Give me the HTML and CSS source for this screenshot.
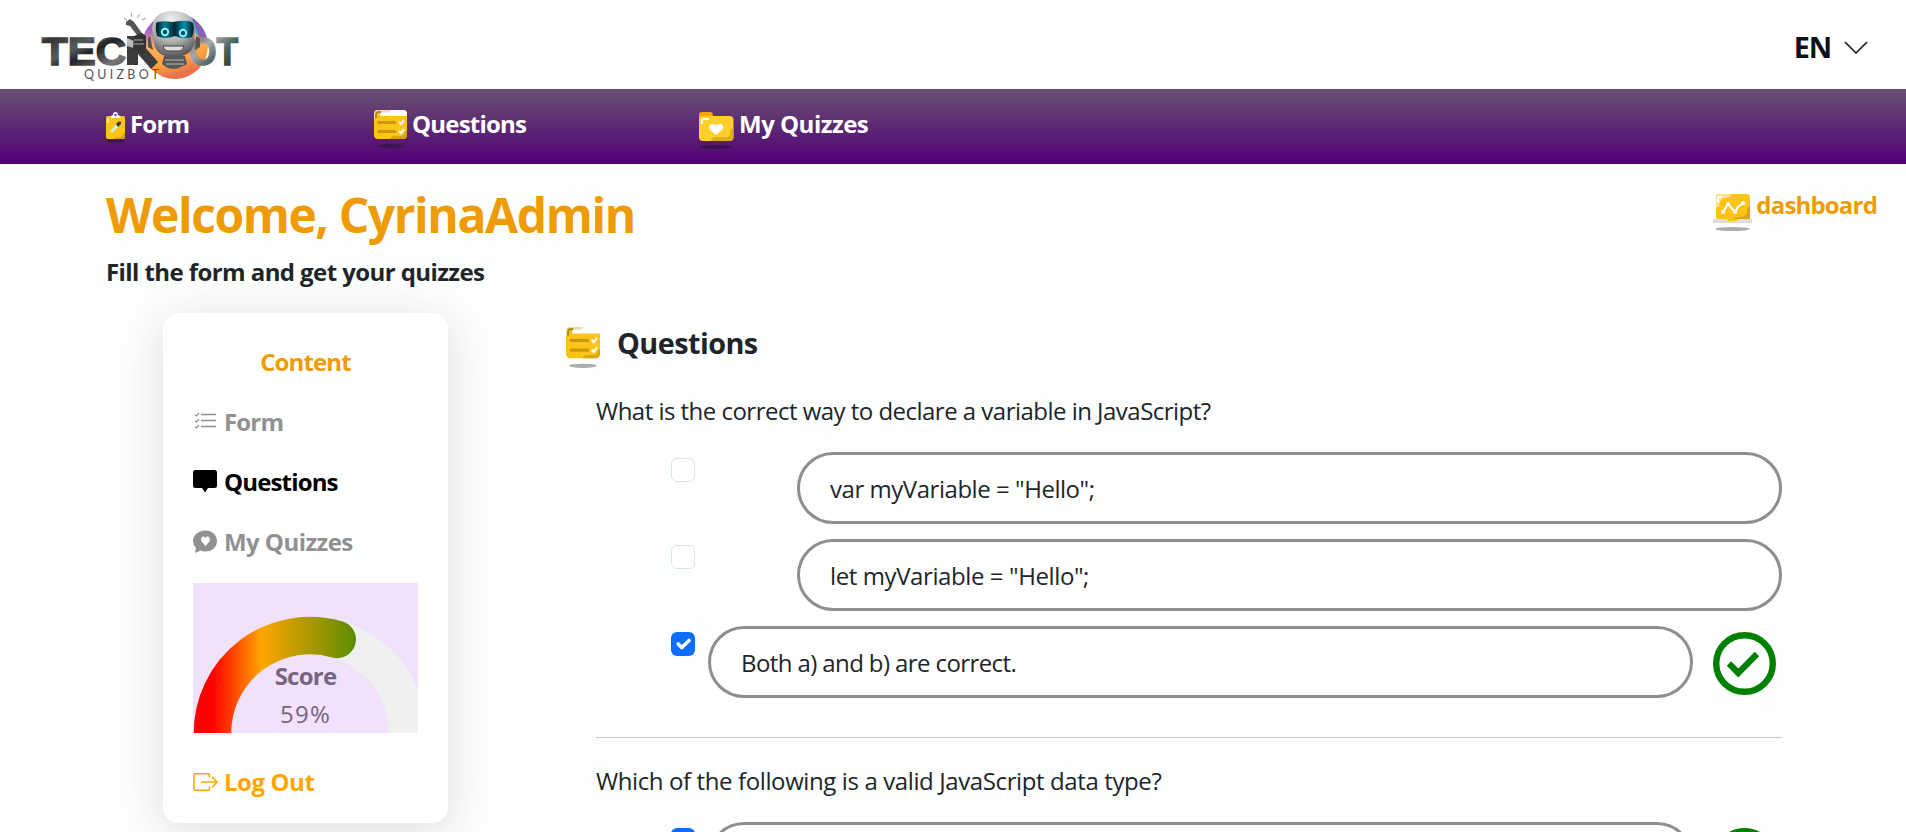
FILE: index.html
```html
<!DOCTYPE html>
<html lang="en">
<head>
<meta charset="utf-8">
<title>TechBot QuizBot</title>
<link rel="stylesheet" href="styles.css">
</head>
<body>
<svg class="defs" width="0" height="0" aria-hidden="true">
  <symbol id="list-icon" viewBox="0 0 33 38">
    <rect x="0" y="0" width="33" height="29" rx="4" fill="#fcc419"/>
    <path d="M4 0h25a4 4 0 0 1 4 4v2H6V0z" fill="#fff"/>
    <path d="M4 0h13q-1 2.500-4 2.500H6Q3 2.500 3 6v2H0V4a4 4 0 0 1 4-4z" fill="#ecdcb0"/>
    <path d="M1 8V5q0-4 4-4h2v2H5q-2 0-2 2v3z" fill="#b98a08"/>
    <path d="M33 20v5a4 4 0 0 1-4 4H16q1-3 5-3h5q5 0 5-4z" fill="#d6a514"/>
    <path d="M5 12.500h16M5 21.500h16" stroke="#c9980c" stroke-width="3" stroke-linecap="round"/>
    <path d="M25 12l2 2 3-4M25 21l2 2 3-4" fill="none" stroke="#fff" stroke-width="2"/>
    <ellipse class="icon-shadow" cx="16.500" cy="36" rx="13.300" ry="2"/>
  </symbol>
</svg>

<header class="topbar">
  <svg class="logo" width="230" height="88" viewBox="0 0 230 88">
    <defs>
      <linearGradient id="metal" x1="0" y1="0" x2="1" y2="1">
        <stop offset="0" stop-color="#999"/><stop offset=".15" stop-color="#333"/><stop offset=".4" stop-color="#555e5c"/><stop offset=".55" stop-color="#222"/><stop offset=".8" stop-color="#777"/><stop offset="1" stop-color="#333"/>
      </linearGradient>
      <linearGradient id="metal2" x1="0" y1="0" x2="1" y2="1">
        <stop offset="0" stop-color="#444"/><stop offset=".35" stop-color="#aaa"/><stop offset=".6" stop-color="#49645f"/><stop offset="1" stop-color="#222"/>
      </linearGradient>
      <linearGradient id="disc" x1="0" y1="0" x2=".3" y2="1">
        <stop offset="0" stop-color="#9b3fc4"/><stop offset=".28" stop-color="#a964c9"/><stop offset=".5" stop-color="#f6b060"/><stop offset=".8" stop-color="#fca33f"/><stop offset="1" stop-color="#e9734f"/>
      </linearGradient>
      <radialGradient id="skull" cx=".45" cy=".2" r=".9">
        <stop offset="0" stop-color="#f2f2f2"/><stop offset=".5" stop-color="#b5b5b5"/><stop offset="1" stop-color="#3c3c3c"/>
      </radialGradient>
      <linearGradient id="visor" x1="0" y1="0" x2="1" y2="0">
        <stop offset="0" stop-color="#04191f"/><stop offset=".25" stop-color="#078096"/><stop offset=".5" stop-color="#032730"/><stop offset=".75" stop-color="#0794ac"/><stop offset="1" stop-color="#04191f"/>
      </linearGradient>
    </defs>
    <circle cx="145" cy="46" r="33" fill="url(#disc)"/>
    <path d="M145 13a33 33 0 0 1 32 26l-10-4-12-18z" fill="#18bfdc"/>
    <path d="M162 18a33 33 0 0 1 15 21l-8-2z" fill="#8860b8"/>
    <text class="logo-word" x="12" y="65" textLength="84" lengthAdjust="spacingAndGlyphs" fill="url(#metal)" stroke="url(#metal)">TEC</text>
    <path d="M97 36h7v12l9-3 15 17-7 7-13-15v11h-11z" fill="#3d3d3d"/>
    <path d="M97 38l7 3v7l-7-2z" fill="#bbb"/>
    <path d="M96 22l4-3 4 3 10 14-4 3-10-13-4-1z" fill="#555"/>
    <path d="M104 36l8-3 4 3v12l-5 4-8-3z" fill="#333"/>
    <path d="M104 40h9M104 44h10" stroke="#aaa"/>
    <path d="M94 18l3 2M101 13l1 4M110 14l-3 4M116 18l-4 2" stroke="#999"/>
    <text class="logo-word" x="159" y="65" textLength="49" lengthAdjust="spacingAndGlyphs" fill="url(#metal2)" stroke="url(#metal2)">OT</text>
    <path d="M134 56h21l2 8-6 3q-8 4-15 0l-4-3z" fill="#575757"/>
    <path d="M135 60h19M136 64h18" stroke="#bbb"/>
    <path d="M120 36l-2 2v9l5 3zM166 36l4 2v9l-5 3z" fill="#555"/>
    <path d="M122 29q1-18 21-18t22 18l-1 14q-3 14-20 14t-20-13z" fill="url(#skull)"/>
    <path d="M126 23q4-3 17-1 16-3 20 1 2 7-1 14-8 3-17-1-10 4-18 0-2-6-1-13z" fill="url(#visor)"/>
    <circle cx="135" cy="32" r="3.200" fill="#064c60" stroke="#8ff1fc" stroke-width="2"/>
    <circle cx="153" cy="33" r="3.200" fill="#064c60" stroke="#8ff1fc" stroke-width="2"/>
    <path d="M133 46h21q-1 5-6 5h-9q-5 0-6-5z" fill="#ddd" stroke="#444"/>
    <text class="logo-sub" x="54" y="79" textLength="75" fill="#555">QUIZBOT</text>
  </svg>
  <div class="language"><span class="language-code">EN</span>
    <svg width="24" height="13" viewBox="0 0 24 13"><path d="M1 1l11 11L23 1" fill="none" stroke="#111" stroke-width="1.500"/></svg>
  </div>
</header>

<nav class="navbar">
  <a class="nav-item nav-form">
    <svg width="19" height="31" viewBox="0 0 19 31">
      <ellipse cx="9.500" cy="29" rx="9.500" ry="1.600" fill="#3d1352"/>
      <rect x="0" y="4" width="19" height="23" rx="2" fill="#fcc419"/>
      <path d="M19 20v5q0 2-2 2H8l2-2h5q2 0 2-3z" fill="#d6a514"/>
      <path d="M5 6V4l2-1q0-3 2.500-3T12 3l2 1v2z" fill="#fff"/><circle cx="9.500" cy="3" r="1.200" fill="#63406f"/>
      <path d="M2 6v5" stroke="#fff3c5" stroke-width="1.500"/>
      <path d="M4 21l1-3 6-6 2 2-6 6z" fill="#d4f5e4"/><path d="M10 12l3-2.500 2 .5v2l-3 3z" fill="#303a3a"/>
    </svg><span class="nav-label">Form</span></a>
  <a class="nav-item nav-questions"><svg class="on-dark" width="33" height="38"><use href="#list-icon"/></svg><span class="nav-label">Questions</span></a>
  <a class="nav-item nav-quizzes">
    <svg width="35" height="38" viewBox="0 0 35 38">
      <path d="M0 3q0-3 3-3h8q3 0 3 4h17v8H0z" fill="#ffa502"/>
      <rect x="0" y="4" width="34.500" height="25" rx="4" fill="#ffd02b"/>
      <path d="M34.500 16v9a4 4 0 0 1-4 4H12q1-4 5-4h10q4 0 4-4 0-4 3.500-5z" fill="#dfad20"/>
      <path d="M3 12V9q0-2 2-2h5" stroke="#fff" stroke-width="2" fill="none"/>
      <path d="M17 23l-5.500-5q-3-4 1-6 3-1 4.500 2 2-3 5-2 4 2 1 6z" fill="#fff"/>
      <ellipse cx="17" cy="35" rx="16" ry="2" fill="#3d1352"/>
    </svg><span class="nav-label">My Quizzes</span></a>
</nav>

<main class="page">
  <div class="intro">
    <div>
      <h1 class="welcome"><span>Welcome, CyrinaAdmin</span></h1>
      <p class="tagline"><span>Fill the form and get your quizzes</span></p>
    </div>
    <a class="dashboard">
      <svg width="39" height="37" viewBox="0 0 39 37">
        <rect x="3" y="0" width="34" height="26" rx="3" fill="#fcc419"/>
        <path d="M3 3q0-3 3-3h12q-1 4-6 4-5 0-5 5l-1 4H3z" fill="#fde28b"/>
        <path d="M37 12v14H20q1-3 6-3 8 0 8-6 0-4 3-5z" fill="#d6a514"/>
        <path d="M5 8V5q0-2 2-2h2" stroke="#fff" stroke-width="2" fill="none"/>
        <path d="M10 18l5-8 7 8 3-5 5-4" fill="none" stroke="#fff" stroke-width="2"/>
        <g fill="#fff"><circle cx="10" cy="18" r="2"/><circle cx="15" cy="10" r="2"/><circle cx="22" cy="18" r="2"/><circle cx="30" cy="9" r="2"/></g>
        <path d="M0 25h39v4H0z" fill="#dedede"/><path d="M14 25h12l-2 2h-9z" fill="#fcc419"/>
        <ellipse cx="19.500" cy="35" rx="17" ry="2" fill="#adadad"/>
      </svg><span>dashboard</span></a>
  </div>

  <div class="columns">
    <aside class="card">
      <h2 class="card-title"><span>Content</span></h2>
      <a class="side-link side-form"><svg width="24" height="24" viewBox="0 0 24 24" fill="none" stroke="#919191" stroke-width="1.300"><path d="M8 5.500h15M8 11.500h15M8 17.500h15M2 6l1.500 1L6 4M2 12l1.500 1L6 10M2 18l1.500 1L6 16"/></svg><span>Form</span></a>
      <a class="side-link side-questions"><svg width="24" height="24" viewBox="0 0 24 24"><path d="M2.500 1h19Q24 1 24 3.500v13q0 2.500-2.500 2.500H15l-3 4.500L9 19H2.500Q0 19 0 16.500v-13Q0 1 2.500 1z"/></svg><span>Questions</span></a>
      <a class="side-link side-quizzes"><svg width="24" height="24" viewBox="0 0 24 24"><path d="M12.500 1.500C19 1.500 24 6 24 12s-5 10.500-11.500 10.500q-3 0-5-1L2 24l1-5q-3-3-3-7C0 6 6 1.500 12.500 1.500z" fill="#919191"/><path d="M12.500 17L9 13q-2-3 0-5 2-1.300 3.500 1Q14 6.700 16 8q2 2 0 5z" fill="#fff"/></svg><span>My Quizzes</span></a>
      <div class="gauge">
        <svg width="225" height="150" viewBox="0 0 225 150">
          <defs><linearGradient id="score" gradientUnits="userSpaceOnUse" x1="19.500" y1="0" x2="214.500" y2="0"><stop offset="0" stop-color="red"/><stop offset=".25" stop-color="orange"/><stop offset="1" stop-color="green"/></linearGradient></defs>
          <path d="M19.500 150a97.500 97.500 0 0 1 195 0" fill="none" stroke="#f0f0f0" stroke-width="37.500"/>
          <path d="M19.500 170V150A97.500 97.500 0 0 1 144.200 56.400" fill="none" stroke="url(#score)" stroke-width="37.500" stroke-linecap="round"/>
        </svg>
        <div class="gauge-text"><span class="gauge-label">Score</span><span class="gauge-value">59%</span></div>
      </div>
      <a class="side-link logout"><svg width="25" height="24" viewBox="0 0 25 24" fill="none" stroke="#ffa502" stroke-width="1.500"><path d="M16.500 7.500V5q0-1.300-1.300-1.300H2.300Q1 3.700 1 5v14q0 1.300 1.300 1.300h12.900q1.300 0 1.300-1.300v-2.500M8 12h16M19 6.800l5 5.200-5 5.200"/></svg><span>Log Out</span></a>
    </aside>

    <section class="quiz">
      <h2 class="quiz-title"><svg class="on-light" width="34" height="41" viewBox="0 0 33 38" preserveAspectRatio="none"><use href="#list-icon"/></svg><span>Questions</span></h2>
      <div class="question">
        <p class="prompt"><span class="p1">What is the correct way to declare a variable in JavaScript?</span></p>
        <div class="option"><i class="check"></i><div class="answer"><span class="a1">var myVariable = "Hello";</span></div></div>
        <div class="option"><i class="check"></i><div class="answer"><span class="a2">let myVariable = "Hello";</span></div></div>
        <div class="option chosen">
          <i class="check checked"><svg width="24" height="24" viewBox="0 0 20 20"><path fill="none" stroke="#fff" stroke-linecap="round" stroke-linejoin="round" stroke-width="3" d="m6 10 3 3 6-6"/></svg></i>
          <div class="answer"><span class="a3">Both a) and b) are correct.</span></div>
          <svg class="correct" width="63" height="63" viewBox="0 0 63 63" fill="none" stroke="green"><circle cx="31.500" cy="31.500" r="28.300" stroke-width="6.400"/><path d="M16 31.500L25.300 41 44 22" stroke-width="6.200"/></svg>
        </div>
      </div>
      <div class="question">
        <p class="prompt"><span class="p2">Which of the following is a valid JavaScript data type?</span></p>
        <div class="option chosen">
          <i class="check checked"></i>
          <div class="answer"></div>
          <svg class="correct" width="63" height="63" viewBox="0 0 63 63" fill="none" stroke="green"><circle cx="31.500" cy="31.500" r="28.300" stroke-width="6.400"/></svg>
        </div>
      </div>
    </section>
  </div>
</main>
</body>
</html>
```
FILE: styles.css
```css
* { box-sizing: border-box; }
html, body { height: 100%; overflow: hidden; }
body {
  margin: 0;
  display: flex;
  flex-direction: column;
  background: #fdfefe;
  color: #212529;
  font: 24px/36px "Open Sans", "Noto Sans", sans-serif;
  white-space: nowrap;
}
h1, h2, p { margin: 0; }
svg { display: block; flex: none; }
.defs { position: absolute; }
.icon-shadow { fill: var(--shadow); }
.on-dark { --shadow: #3d1352; }
.on-light { --shadow: #adadad; }

.topbar {
  flex: none;
  height: 89px;
  padding: 0 38px 0 30px;
  display: flex;
  justify-content: space-between;
  background: #fff;
}
.logo-word { font: bold 39px "Liberation Sans", sans-serif; stroke-width: 1.6px; }
.logo-sub { font: 12.5px Lato, sans-serif; }
.language {
  display: flex;
  align-items: center;
  gap: 13px;
  height: 94px;
  color: #111;
  font-size: 28.8px;
  font-weight: 700;
}
.language-code { letter-spacing: -1.2px; }

.navbar {
  flex: none;
  height: 75px;
  display: flex;
  padding-left: 106px;
  background: linear-gradient(#665171, #530076);
  color: #fff;
  font-weight: 700;
  letter-spacing: -.8px;
}
.nav-item { display: flex; align-items: flex-start; padding-top: 23px; gap: 5px; }
.nav-label { margin-top: -6px; }
.nav-form { width: 268px; }
.nav-questions { width: 325px; padding-top: 21px; }
.nav-questions .nav-label { margin-top: -4px; }
.nav-quizzes { letter-spacing: -.5px; }

.page { flex: 1; min-height: 0; }
.intro { height: 149px; display: flex; justify-content: space-between; padding: 20px 29px 0 106px; }
.welcome { height: 60px; font-size: 48px; line-height: 62px; letter-spacing: -1.42px; color: #ee9b05; font-weight: 700; }
.tagline { margin-top: 10px; font-weight: 700; letter-spacing: -.58px; }
.dashboard { display: flex; align-items: flex-start; gap: 4px; padding-top: 10px; color: #ee9b05; font-weight: 700; letter-spacing: -.82px; }
.dashboard span { margin-top: -7px; }

.columns { display: flex; padding-left: 163px; }
.card {
  width: 285px;
  height: 510px;
  padding: 31px 30px 0;
  border-radius: 16px;
  background: #fff;
  box-shadow: 0 8px 48px rgba(33, 37, 41, .15);
}
.card-title { height: 60px; font-size: 24px; line-height: 36px; text-align: center; color: #ee9b05; letter-spacing: -.87px; }
.side-link { height: 60px; display: flex; gap: 7px; font-weight: 700; color: #919191; letter-spacing: -.85px; }
.side-link svg { margin-top: 5px; }
.side-questions { color: #000; }
.side-quizzes { letter-spacing: -.55px; }
.gauge { display: grid; height: 150px; margin-top: -1px; background: #f2e1fb; overflow: hidden; }
.gauge > * { grid-area: 1 / 1; }
.gauge svg { overflow: hidden; }
.gauge-text { display: flex; flex-direction: column; align-items: center; padding-top: 74px; color: #766581; line-height: 38px; }
.gauge-label { font-weight: 700; letter-spacing: -.75px; }
.gauge-value { letter-spacing: 1.3px; }
.logout { margin-top: 31px; gap: 6px; color: #ffa502; letter-spacing: -.45px; }
.side-link.logout svg { margin-top: 6px; }

.quiz { width: 1216px; margin-left: 118px; padding-top: 14px; }
.quiz-title { display: flex; gap: 17px; height: 80px; font-size: 28.8px; line-height: 31px; letter-spacing: -.55px; }
.question { margin-left: 30px; width: 1186px; }
.prompt { height: 45px; line-height: 36px; margin-top: -14px; margin-bottom: 14px; }
.p1 { letter-spacing: -.52px; }
.p2 { letter-spacing: -.39px; }
.a1 { letter-spacing: -.46px; }
.a2 { letter-spacing: -.4px; }
.a3 { letter-spacing: -.6px; }
.option { display: flex; height: 72px; margin-bottom: 15px; padding-left: 75px; }
.check {
  flex: none;
  width: 24px;
  height: 24px;
  margin-top: 6px;
  border: 1px solid #dee2e6;
  border-radius: 6px;
  background: #fff;
}
.checked { border: 0; background: #0d6efd; }
.answer {
  width: 985px;
  height: 72px;
  margin-left: 102px;
  padding: 0 30px;
  border: 3px solid #8e8e8e;
  border-radius: 36px;
  background: #fff;
  line-height: 68px;
}
.chosen .answer { margin-left: 13px; }
.correct { margin: 6px 0 0 20px; }
.question + .question { margin-top: 39px; border-top: 1px solid #c8c9ca; padding-top: 39px; }
```
